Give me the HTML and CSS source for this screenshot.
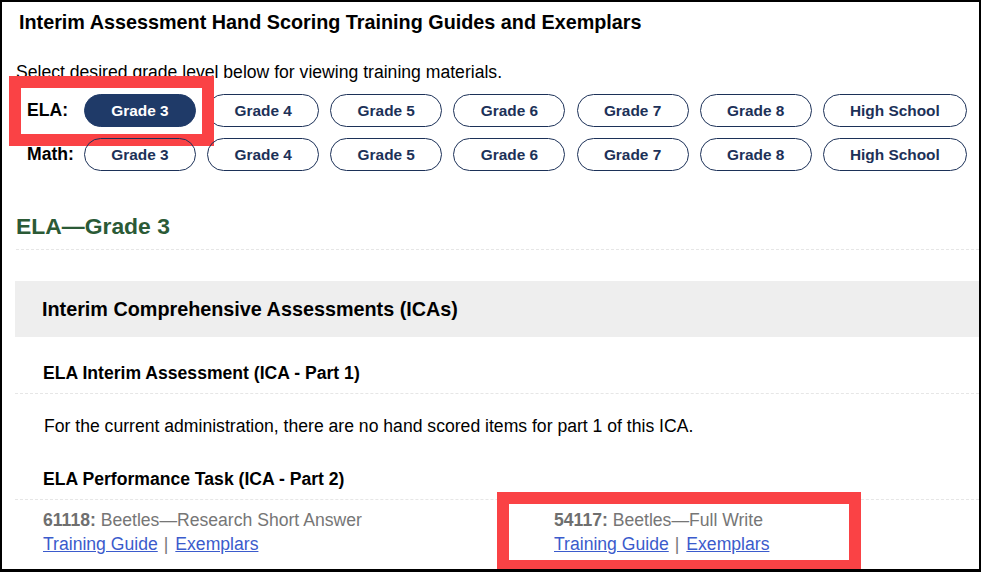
FILE: index.html
```html
<!DOCTYPE html>
<html lang="en">
<head>
<meta charset="utf-8">
<title>Interim Assessment Hand Scoring Training Guides and Exemplars</title>
<link rel="stylesheet" href="styles.css">
</head>
<body>
<div class="frame">
  <h1 class="title">Interim Assessment Hand Scoring Training Guides and Exemplars</h1>
  <p class="intro">Select desired grade level below for viewing training materials.</p>
  <div class="grades">
    <div class="grade-row">
      <span class="subject">ELA:</span>
      <a class="pill active">Grade 3</a>
      <a class="pill">Grade 4</a>
      <a class="pill">Grade 5</a>
      <a class="pill">Grade 6</a>
      <a class="pill">Grade 7</a>
      <a class="pill">Grade 8</a>
      <a class="pill wide">High School</a>
      <span class="mark mark-ela"></span>
    </div>
    <div class="grade-row">
      <span class="subject">Math:</span>
      <a class="pill">Grade 3</a>
      <a class="pill">Grade 4</a>
      <a class="pill">Grade 5</a>
      <a class="pill">Grade 6</a>
      <a class="pill">Grade 7</a>
      <a class="pill">Grade 8</a>
      <a class="pill wide">High School</a>
    </div>
  </div>
  <h2 class="grade-heading">ELA—Grade 3</h2>
  <div class="panel-head">Interim Comprehensive Assessments (ICAs)</div>
  <h3 class="sub sub-first">ELA Interim Assessment (ICA - Part 1)</h3>
  <p class="note">For the current administration, there are no hand scored items for part 1 of this ICA.</p>
  <h3 class="sub sub-second">ELA Performance Task (ICA - Part 2)</h3>
  <div class="items">
    <div class="item">
      <div class="item-name"><b>61118:</b> Beetles—Research Short Answer</div>
      <div class="item-links"><a href="#">Training Guide</a><span class="sep">|</span><a href="#">Exemplars</a></div>
    </div>
    <div class="item">
      <div class="item-name"><b>54117:</b> Beetles—Full Write</div>
      <div class="item-links"><a href="#">Training Guide</a><span class="sep">|</span><a href="#">Exemplars</a></div>
      <span class="mark mark-item"></span>
    </div>
  </div>
</div>
</body>
</html>
```
FILE: styles.css
```css
* { box-sizing: border-box; }
html, body { margin: 0; padding: 0; background: #fff; }
body {
  font-family: "Liberation Sans", Arial, sans-serif;
  color: #000;
}
.frame {
  position: relative;
  width: 981px;
  height: 572px;
  border-style: solid;
  border-color: #000;
  border-width: 2px 2px 3px 2px;
  overflow: hidden;
  padding: 0 0 0 13px;
}
.title {
  margin: 8px 0 0 4px;
  font-size: 19.8px;
  font-weight: bold;
  line-height: 24px;
}
.intro {
  margin: 27px 0 0 1px;
  font-size: 17.6px;
  line-height: 22px;
}
.grades {
  margin-top: 11px;
  display: flex;
  flex-direction: column;
  gap: 11px;
}
.grade-row {
  position: relative;
  display: flex;
  align-items: center;
  gap: 11.15px;
}
.subject {
  width: 69px;
  padding-left: 12px;
  margin-right: -11.15px;
  font-size: 17.6px;
  font-weight: bold;
}
.pill {
  width: 112px;
  height: 33px;
  border: 1px solid #1c3158;
  border-radius: 17px;
  display: flex;
  align-items: center;
  justify-content: center;
  color: #1c3158;
  font-size: 15.4px;
  font-weight: bold;
  text-decoration: none;
}
.pill.wide { width: 144px; }
.pill.active { background: #1f3a68; color: #fff; border-color: #1f3a68; }
.mark {
  position: absolute;
  border: 12px solid #fa4245;
}
.mark-ela {
  left: -6px;
  top: -18px;
  width: 205px;
  height: 70px;
}
.grade-heading {
  margin: 41px 0 0 1px;
  padding-bottom: 9px;
  color: #2b5a36;
  font-size: 22.9px;
  font-weight: bold;
  line-height: 28px;
  border-bottom: 1px dashed #e6e6e6;
}
.panel-head {
  margin-top: 31px;
  height: 56px;
  background: #eeeeee;
  padding-left: 27px;
  display: flex;
  align-items: center;
  font-size: 19.8px;
  font-weight: bold;
}
.sub {
  margin: 0;
  padding: 0 0 9px 28px;
  font-size: 17.6px;
  font-weight: bold;
  line-height: 22px;
  border-bottom: 1px dashed #e6e6e6;
}
.sub-first { padding-top: 25px; }
.sub-second { padding-top: 31px; }
.note {
  margin: 0;
  padding: 21px 0 0 29px;
  font-size: 17.6px;
  line-height: 22px;
}
.items {
  display: grid;
  grid-template-columns: 511px 1fr;
  padding: 8px 0 0 28px;
}
.item {
  position: relative;
  font-size: 17.6px;
  line-height: 24px;
  color: #767676;
}
.item-name b { color: #6f6f6f; }
.item-links a { color: #3b5bcc; text-decoration: underline; }
.sep { padding: 0 7px 0 6px; color: #767676; }
.mark-item {
  left: -57px;
  top: -16px;
  width: 364px;
  height: 80px;
}
```
